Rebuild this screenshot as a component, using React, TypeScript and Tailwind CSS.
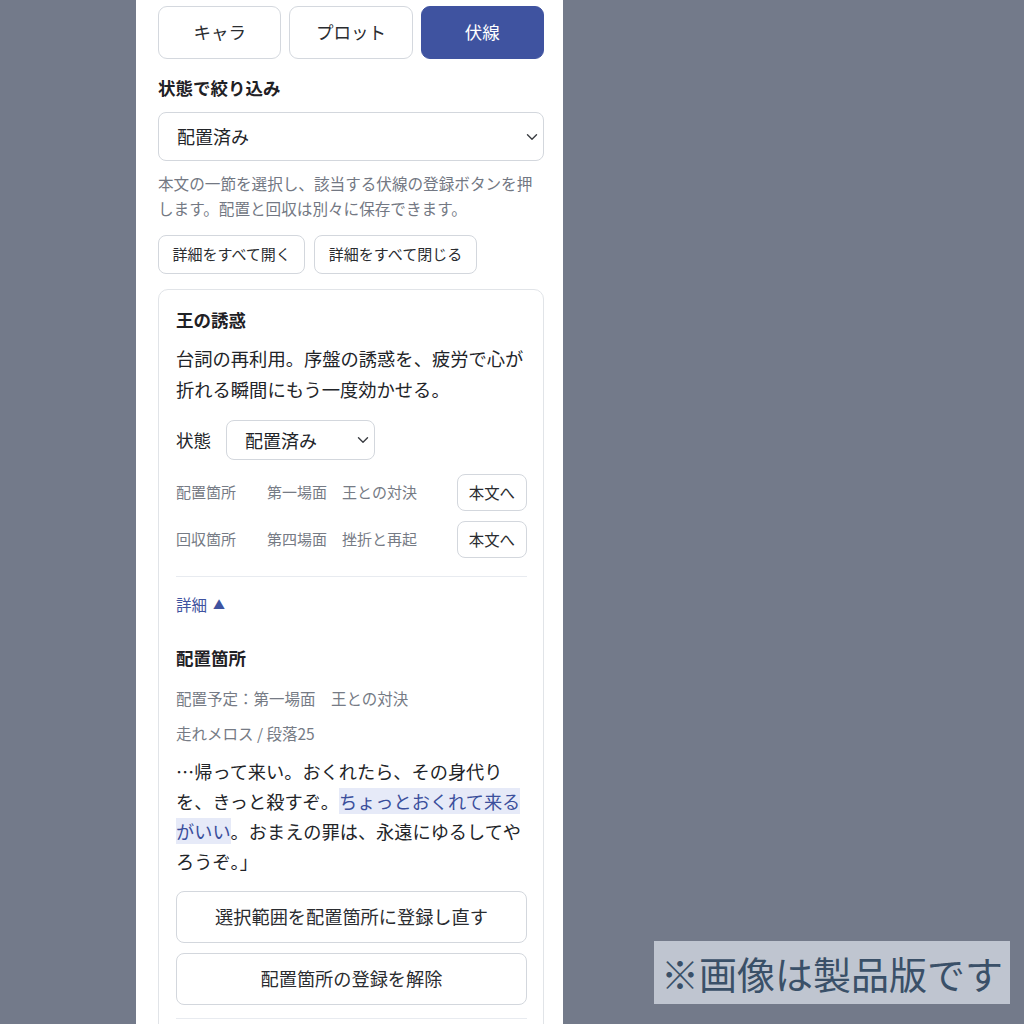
import React, { useState } from 'react'

const font = { fontFamily: '"Noto Sans CJK JP", "Noto Sans", sans-serif' }

const tabs = ['キャラ', 'プロット', '伏線']

const Chevron: React.FC = () => (
  <svg width="12" height="8" viewBox="0 0 12 8" fill="none" className="pointer-events-none absolute right-[6px] top-1/2 -translate-y-1/2">
    <path d="M1.5 1.8 6 6.2l4.5-4.4" stroke="#3a3d42" strokeWidth="1.4" strokeLinecap="round" strokeLinejoin="round" />
  </svg>
)

const StatusSelect: React.FC<{ className: string; value: string; onChange: (v: string) => void }> = ({
  className,
  value,
  onChange,
}) => (
  <div className={`relative ${className}`}>
    <select
      value={value}
      onChange={e => onChange(e.target.value)}
      className="h-full w-full appearance-none rounded-lg border border-[#d3d7dd] bg-white pl-[18px] text-[18px] text-[#222428] outline-none"
    >
      <option>配置済み</option>
      <option>未配置</option>
      <option>回収済み</option>
    </select>
    <Chevron />
  </div>
)

const LocationRow: React.FC<{ label: string; scene: string; title: string }> = ({ label, scene, title }) => (
  <div className="flex items-center">
    <span className="w-[91px] text-[15px] text-[#767b85]">{label}</span>
    <span className="flex-1 text-[15px] text-[#767b85]">
      {scene}　{title}
    </span>
    <button className="h-[37px] rounded-lg border border-[#d3d7dd] bg-white px-[11px] text-[15.4px] text-[#2a2c30]">
      本文へ
    </button>
  </div>
)

export default function App() {
  const [tab, setTab] = useState('伏線')
  const [filter, setFilter] = useState('配置済み')
  const [status, setStatus] = useState('配置済み')
  const [open, setOpen] = useState(true)

  return (
    <div className="relative h-[1024px] overflow-hidden bg-[#737a8a]" style={font}>
      <div className="ml-[136px] h-full w-[427px] bg-white pl-[22px] pr-[19px] pt-[6px]">
        <div className="grid grid-cols-3 gap-[8px]">
          {tabs.map(t => (
            <button
              key={t}
              onClick={() => setTab(t)}
              className={
                t === tab
                  ? 'h-[53px] rounded-[9px] border border-[#3f53a0] bg-[#3f53a0] text-[17.5px] text-white'
                  : 'h-[53px] rounded-[9px] border border-[#d4d8de] bg-white text-[17.5px] text-[#2a2c30]'
              }
            >
              {t}
            </button>
          ))}
        </div>

        <h2 className="mt-[16px] text-[17.5px] font-bold leading-[26px] text-[#1f2125]">状態で絞り込み</h2>
        <StatusSelect className="mt-[11px] h-[49px]" value={filter} onChange={setFilter} />

        <p className="mt-[10px] text-[15.6px] leading-[25px] text-[#737883]">
          本文の一節を選択し、該当する伏線の登録ボタンを押します。配置と回収は別々に保存できます。
        </p>

        <div className="mt-[14px] flex gap-[9px]">
          <button
            onClick={() => setOpen(true)}
            className="h-[39px] rounded-lg border border-[#d3d7dd] bg-white px-[13.5px] text-[15px] text-[#2a2c30]"
          >
            詳細をすべて開く
          </button>
          <button
            onClick={() => setOpen(false)}
            className="h-[39px] rounded-lg border border-[#d3d7dd] bg-white px-[13.5px] text-[15px] text-[#2a2c30]"
          >
            詳細をすべて閉じる
          </button>
        </div>

        <div className="mt-[15px] rounded-[10px] border border-[#e1e4e8] pb-[20px] pl-[17px] pr-[16px] pt-[17px]">
          <h3 className="text-[17.5px] font-bold leading-[26px] text-[#1f2125]">王の誘惑</h3>
          <p className="mt-[10px] text-[18.3px] leading-[31px] text-[#222428]">
            台詞の再利用。序盤の誘惑を、疲労で心が折れる瞬間にもう一度効かせる。
          </p>

          <div className="mt-[15px] flex items-center gap-[15px]">
            <span className="text-[17.5px] text-[#222428]">状態</span>
            <StatusSelect className="h-[40px] w-[149px]" value={status} onChange={setStatus} />
          </div>

          <div className="mt-[14px] flex flex-col gap-[10px]">
            <LocationRow label="配置箇所" scene="第一場面" title="王との対決" />
            <LocationRow label="回収箇所" scene="第四場面" title="挫折と再起" />
          </div>

          <div className="mt-[18px] border-t border-[#e8ebf0]" />

          <button
            onClick={() => setOpen(!open)}
            className="mt-[16px] flex h-[24px] items-center gap-[6px] text-[15.5px] text-[#3f53a0]"
          >
            詳細<span className="text-[12px]">{open ? '▲' : '▼'}</span>
          </button>

          {open && (
            <div>
              <h4 className="mt-[28px] text-[17.5px] font-bold leading-[26px] text-[#1f2125]">配置箇所</h4>
              <p className="mt-[15px] text-[15.5px] leading-[24px] text-[#767b85]">配置予定：第一場面　王との対決</p>
              <p className="mt-[11px] text-[15.5px] leading-[24px] text-[#767b85]">走れメロス / 段落25</p>
              <p className="mt-[11px] text-[18.2px] leading-[30px] text-[#222428]">
                …帰って来い。おくれたら、その身代りを、きっと殺すぞ。
                <span className="bg-[#e6eaf8] text-[#3b4f9c]">ちょっとおくれて来るがいい</span>
                。おまえの罪は、永遠にゆるしてやろうぞ。」
              </p>
              <div className="mt-[15px] flex flex-col gap-[10px]">
                <button className="h-[52px] rounded-lg border border-[#d3d7dd] bg-white text-[18.2px] text-[#2a2c30]">
                  選択範囲を配置箇所に登録し直す
                </button>
                <button className="h-[52px] rounded-lg border border-[#d3d7dd] bg-white text-[18.2px] text-[#2a2c30]">
                  配置箇所の登録を解除
                </button>
              </div>
              <div className="mt-[13px] border-t border-[#e8ebf0]" />
            </div>
          )}
        </div>
      </div>

      <div className="absolute left-[654px] top-[941px] flex h-[63px] w-[356px] items-center justify-center bg-[#bfc5d0] text-[38px] text-[#3a5068]">
        ※画像は製品版です
      </div>
    </div>
  )
}
